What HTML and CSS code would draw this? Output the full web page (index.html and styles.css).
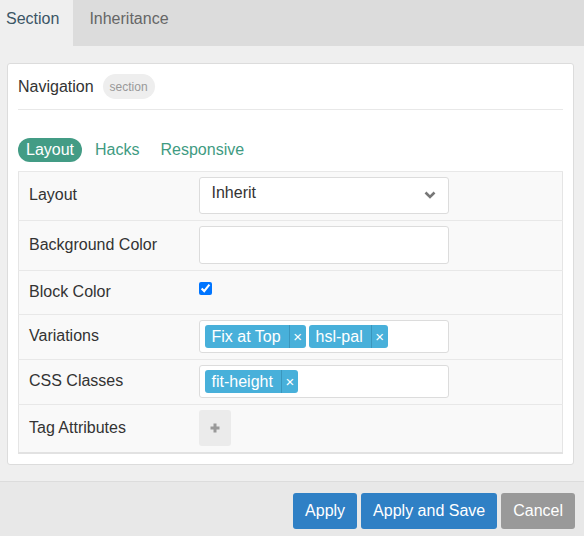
FILE: index.html
```html
<!DOCTYPE html>
<html lang="en">
<head>
  <meta charset="UTF-8" />
  <title>Section Settings</title>
  <link rel="stylesheet" href="styles.css">
</head>
<body>
  <div class="dialog">
    <div class="tabs">
      <div class="tab active">Section</div>
      <div class="tab">Inheritance</div>
    </div>

    <div class="panel">
      <div class="card">
        <div class="card-head">
          <span class="title">Navigation</span>
          <span class="badge">section</span>
        </div>

        <div class="pills">
          <span class="pill active">Layout</span>
          <span class="pill">Hacks</span>
          <span class="pill">Responsive</span>
        </div>

        <table class="props">
          <tr>
            <td class="label">Layout</td>
            <td>
              <div class="select">
                <span>Inherit</span>
                <svg class="chevron" width="12" height="8" viewBox="0 0 12 8">
                  <path d="M1.5 1.5 L6 6 L10.5 1.5" fill="none" stroke="#777" stroke-width="2.6"/>
                </svg>
              </div>
            </td>
          </tr>
          <tr>
            <td class="label">Background Color</td>
            <td><input class="text-input" type="text"></td>
          </tr>
          <tr>
            <td class="label">Block Color</td>
            <td class="check-cell"><input type="checkbox" checked></td>
          </tr>
          <tr>
            <td class="label">Variations</td>
            <td>
              <div class="tag-input">
                <span class="tag">Fix at Top<span class="x">×</span></span>
                <span class="tag">hsl-pal<span class="x">×</span></span>
              </div>
            </td>
          </tr>
          <tr>
            <td class="label">CSS Classes</td>
            <td>
              <div class="tag-input">
                <span class="tag">fit-height<span class="x">×</span></span>
              </div>
            </td>
          </tr>
          <tr>
            <td class="label">Tag Attributes</td>
            <td>
              <button class="add-btn">
                <svg width="10" height="10" viewBox="0 0 10 10">
                  <path d="M5 0.5 V9.5 M0.5 5 H9.5" stroke="#999" stroke-width="3"/>
                </svg>
              </button>
            </td>
          </tr>
        </table>
      </div>
    </div>

    <div class="footer">
      <button class="btn btn-primary">Apply</button>
      <button class="btn btn-primary">Apply and Save</button>
      <button class="btn btn-muted">Cancel</button>
    </div>
  </div>
</body>
</html>
```

FILE: styles.css
```css
* {
  box-sizing: border-box;
}

body {
  margin: 0;
  font-family: "Liberation Sans", Arial, sans-serif;
  font-size: 16px;
  color: #333;
  background: #efefef;
}

.dialog {
  width: 584px;
  height: 536px;
  display: flex;
  flex-direction: column;
}

/* top tabs */
.tabs {
  display: flex;
  flex-shrink: 0;
  height: 46px;
  background: #dcdcdc;
}

.tab {
  padding: 10px 15px 0 16px;
  color: #666;
  line-height: 18px;
}

.tab:first-child {
  padding-left: 6px;
  padding-right: 14px;
}

.tab.active {
  background: #efefef;
  color: #3b5565;
}

.panel {
  flex: 1;
  padding: 17px 10px 0 7px;
}

.card {
  background: #fff;
  border: 1px solid #dcdcdc;
  border-radius: 3px;
  padding: 10px;
}

.card-head {
  display: flex;
  align-items: center;
  padding-bottom: 10px;
  border-bottom: 1px solid #e8e8e8;
}

.title {
  color: #333;
}

.badge {
  margin-left: 9px;
  height: 25px;
  line-height: 27px;
  padding: 0 7px;
  border-radius: 13px;
  background: #eee;
  color: #999;
  font-size: 12px;
}

/* sub navigation */
.pills {
  display: flex;
  gap: 5px;
  margin-top: 28px;
  margin-bottom: 9px;
}

.pill {
  height: 24px;
  line-height: 24px;
  padding: 0 8px;
  border-radius: 12px;
  color: #3f9b82;
}

.pill.active {
  background: #439c85;
  color: #fff;
}

/* property table */
.props {
  width: 100%;
  border-collapse: collapse;
  background: #f9f9f9;
  border: 1px solid #e5e5e5;
  border-bottom: 2px solid #e2e2e2;
}

.props td {
  border-top: 1px solid #e8e8e8;
  padding: 5px 10px 6px;
  vertical-align: middle;
}

.props td.label {
  width: 170px;
  color: #333;
  padding-top: 5px;
  padding-bottom: 7px;
}

.select {
  width: 250px;
  height: 37px;
  background: #fff;
  border: 1px solid #dcdcdc;
  border-radius: 3px;
  padding: 4px 12px 0;
  display: flex;
  justify-content: space-between;
  align-items: flex-start;
  line-height: 22px;
}

.chevron {
  margin-top: 9px;
}

.text-input {
  display: block;
  width: 250px;
  height: 38px;
  background: #fff;
  border: 1px solid #dcdcdc;
  border-radius: 3px;
  font: inherit;
}

.check-cell {
  height: 44px;
}

.check-cell input {
  margin: 0 0 8px;
  width: 13px;
  height: 13px;
  display: block;
}

.tag-input {
  width: 250px;
  height: 33px;
  background: #fff;
  border: 1px solid #dcdcdc;
  border-radius: 3px;
  padding: 4px 5px;
  display: flex;
  gap: 3px;
}

.tag {
  display: flex;
  align-items: center;
  height: 23px;
  padding-left: 7px;
  background: #48b0da;
  color: #fff;
  border-radius: 3px;
  line-height: 23px;
}

.tag .x {
  margin-left: 8px;
  width: 17px;
  text-align: center;
  border-left: 1px solid #3a96bd;
  font-size: 15px;
}

.add-btn {
  display: flex;
  align-items: center;
  justify-content: center;
  width: 32px;
  height: 36px;
  border: none;
  border-radius: 3px;
  background: #ebebeb;
  padding: 0;
}

/* bottom action bar */
.footer {
  flex-shrink: 0;
  height: 55px;
  border-top: 1px solid #dcdcdc;
  background: #e8e8e8;
  display: flex;
  justify-content: flex-end;
  align-items: flex-start;
  gap: 4px;
  padding: 11px 9px 0 0;
}

.btn {
  height: 36px;
  padding: 0 12px;
  border: none;
  border-radius: 3px;
  color: #fff;
  font: inherit;
}

.btn-primary {
  background: #2f80c5;
}

.btn-muted {
  background: #999;
}
```
